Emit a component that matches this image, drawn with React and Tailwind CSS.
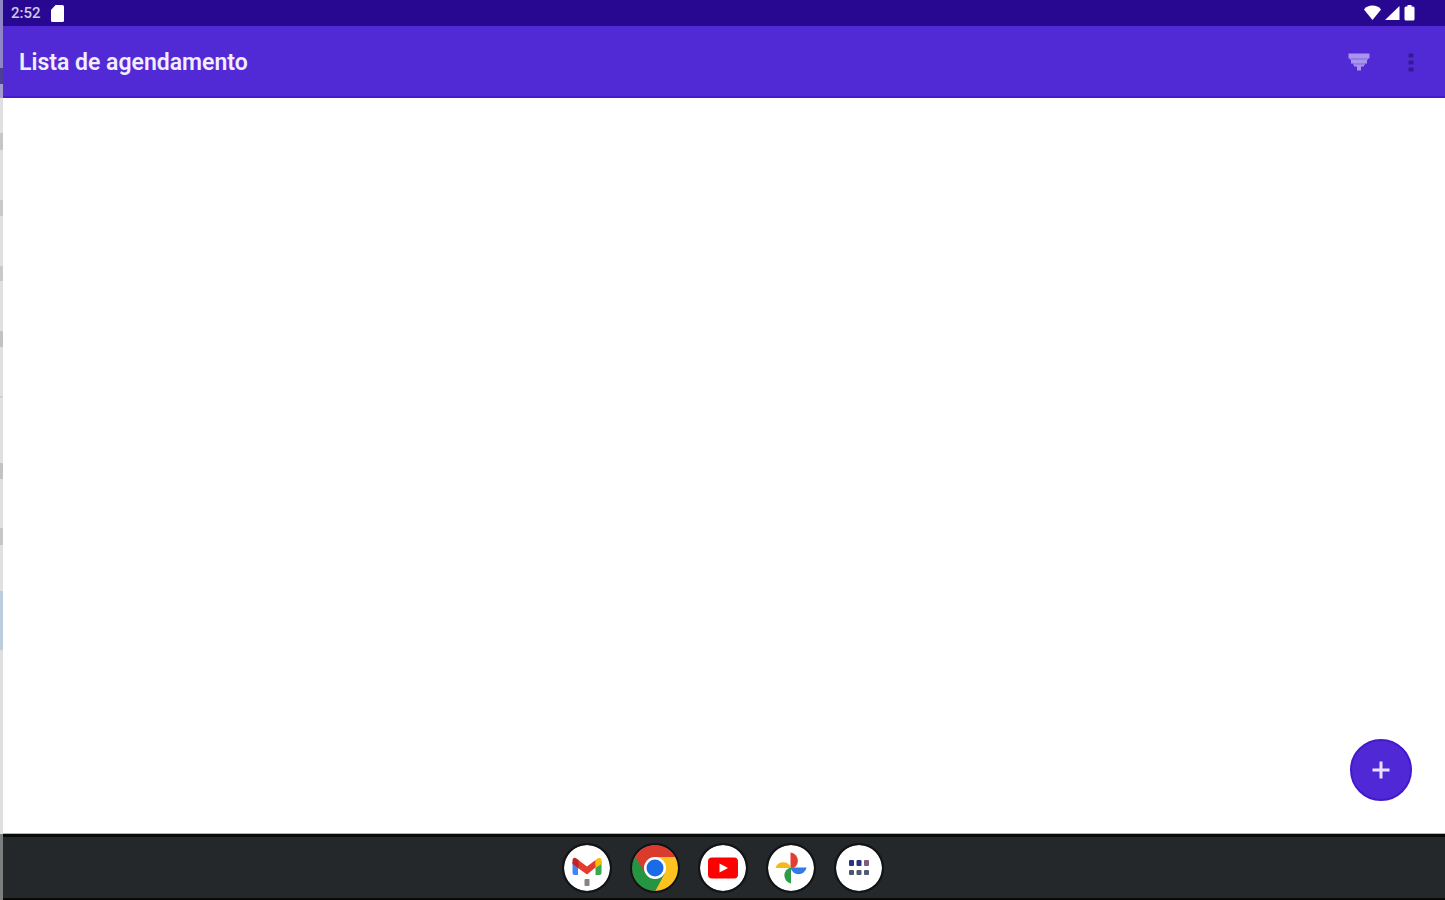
import React from "react";

// Edge of the window behind, seen along the left side
const edgeSegments = [
  { height: 68, color: "#8f84c6" },
  { height: 16, color: "#4d3f98" },
  { height: 14, color: "#a39ad0" },
  { height: 35, color: "#e0e0e0" },
  { height: 17, color: "#c6c6c6" },
  { height: 50, color: "#e0e0e0" },
  { height: 16, color: "#c9c9c9" },
  { height: 50, color: "#e0e0e0" },
  { height: 15, color: "#c9c9c9" },
  { height: 50, color: "#e0e0e0" },
  { height: 16, color: "#c2c2c2" },
  { height: 49, color: "#e0e0e0" },
  { height: 2, color: "#d0d0d0" },
  { height: 65, color: "#e0e0e0" },
  { height: 16, color: "#c2c2c2" },
  { height: 49, color: "#e0e0e0" },
  { height: 17, color: "#c6c6c6" },
  { height: 46, color: "#e0e0e0" },
  { height: 59, color: "#bccddd" },
];

const WindowEdge = () => (
  <div className="flex w-[3px] shrink-0 flex-col">
    {edgeSegments.map((segment, index) => (
      <div
        key={index}
        style={{ height: segment.height, backgroundColor: segment.color }}
      />
    ))}
    <div className="flex-1 bg-[#e0dfe0]" />
    <div className="h-[66px] bg-[#7d7f7e]" />
  </div>
);

const StatusBar = () => (
  <div className="flex h-[26px] items-center justify-between bg-[#290891] pr-[30px] pl-2 text-[#d0caea]">
    <div className="flex items-center gap-2.5">
      <span className="text-[15px] leading-6 font-medium">2:52</span>
      <svg width="13" height="17" viewBox="0 0 13 17" fill="#fff">
        <path d="M4.500 0H11.500A1.500 1.500 0 0 1 13 1.500V15.500A1.500 1.500 0 0 1 11.500 17H1.500A1.500 1.500 0 0 1 0 15.500V5Z" />
      </svg>
    </div>
    <div className="flex items-center gap-1">
      <svg width="17" height="16" viewBox="0 0 17 16" fill="#fff">
        <path d="M0 4.400C2.200 1.600 5 .5 8.500 .5s6.300 1.100 8.500 3.900L8.500 15Z" />
      </svg>
      <svg width="15" height="16" viewBox="0 0 15 16" fill="#fff">
        <path d="M14.500 1V15H0Z" />
      </svg>
      <svg width="11" height="16" viewBox="0 0 11 16" fill="#fff">
        <path d="M3.500 0H7.500V1.500H9A1.500 1.500 0 0 1 10.500 3V14A1.500 1.500 0 0 1 9 15.500H2A1.500 1.500 0 0 1 .5 14V3A1.500 1.500 0 0 1 2 1.500H3.500Z" />
      </svg>
    </div>
  </div>
);

const AppBar = () => (
  <header className="flex h-[72px] items-center justify-between border-b-2 border-[#451ccb] bg-[#512ad5] pt-1 pr-[18px] pl-4">
    <h1 className="text-[23px] leading-8 font-semibold text-[#f1edfd]">
      Lista de agendamento
    </h1>
    <div className="flex items-center gap-5">
      <button aria-label="Filtrar" className="flex size-8 items-center justify-center">
        <svg width="22" height="20" viewBox="0 0 22 20" fill="#a994ee">
          <path d="M0.500 0.500H21.500V5.500H0.500ZM3 6.500H19V10.500H3ZM6 11.500H16V13.500H6ZM9 13.500H13V17.500H9Z" />
          <path d="M2 5H20V7H2ZM5 10H17V12H5Z" fill="#937ce5" />
        </svg>
      </button>
      <button aria-label="Mais opções" className="flex size-8 items-center justify-center">
        <svg width="6" height="20" viewBox="0 0 6 20" fill="#341a91">
          <rect x="0.500" y="0.500" width="5" height="4" rx="1" />
          <rect x="0.500" y="7.500" width="5" height="4" rx="1" />
          <rect x="0.500" y="14.500" width="5" height="4" rx="1" />
        </svg>
      </button>
    </div>
  </header>
);

const GmailIcon = () => (
  <svg viewBox="0 0 46 46" className="size-full">
    <path d="M8.500 17L14 21V30H10.500A2 2 0 0 1 8.500 28Z" fill="#4285f4" />
    <path d="M31.500 20L37.500 16V28A2 2 0 0 1 35.500 30H31.500Z" fill="#34a853" />
    <path d="M31.500 15L33.500 13.500C35.500 12 37.500 13 37.500 15.500V19L31.500 23Z" fill="#fbbc04" />
    <path d="M14 14.800L23 21.500 31.500 15V22.500L23 29.500 14 23Z" fill="#e33b2e" />
    <path d="M8.500 19V15.500C8.500 13 10.500 12 12.500 13.500L14.500 15V23.300Z" fill="#c5221f" />
    <rect x="20.500" y="34" width="5" height="7" rx="1" fill="#858585" />
  </svg>
);

const ChromeIcon = () => (
  <svg viewBox="0 0 46 46" className="size-full">
    <circle cx="23" cy="23" r="23" fill="#db3a2c" />
    <path d="M23 12H43.200A23 23 0 0 1 23 46L32.500 28.500Z" fill="#fcc31e" />
    <path d="M3.080 11.500L13.500 28.500 23 34H29.500L23 46A23 23 0 0 1 3.080 11.500Z" fill="#259541" />
    <path d="M23 34L32.500 28.500 23 46Z" fill="#259541" />
    <circle cx="23" cy="23" r="11" fill="#fff" />
    <circle cx="23" cy="23" r="8.500" fill="#1a6be8" />
  </svg>
);

const YoutubeIcon = () => (
  <svg viewBox="0 0 46 46" className="size-full">
    <rect x="8" y="12.500" width="30" height="21" rx="4" fill="#ff0000" />
    <path d="M19.500 18.500L28 23 19.500 27.500Z" fill="#fff" />
  </svg>
);

const PhotosIcon = () => (
  <svg viewBox="0 0 46 46" className="size-full">
    <path d="M22.500 7.500A8.300 8.300 0 0 1 22.500 24Z" fill="#e0402f" />
    <path d="M38.600 22.500A8.200 8.200 0 0 1 22.500 22.500Z" fill="#3578ea" />
    <path d="M23 38.600A8.200 8.200 0 0 1 23 22.500Z" fill="#2a9d46" />
    <path d="M7.400 23A8.200 8.200 0 0 1 23 23Z" fill="#f5b91c" />
  </svg>
);

const AppsIcon = () => (
  <svg viewBox="0 0 46 46" className="size-full">
    <rect x="13" y="15" width="5" height="6" rx="1" fill="#2b3182" />
    <rect x="20.500" y="15" width="5" height="6" rx="1" fill="#263585" />
    <rect x="28" y="15" width="5" height="6" rx="1" fill="#85597c" />
    <rect x="13" y="25" width="5" height="5" rx="1" fill="#505466" />
    <rect x="20.500" y="25" width="5" height="5" rx="1" fill="#54586d" />
    <rect x="28" y="25" width="5" height="5" rx="1" fill="#525878" />
  </svg>
);

const dockApps = [
  { name: "Gmail", Icon: GmailIcon },
  { name: "Chrome", Icon: ChromeIcon },
  { name: "YouTube", Icon: YoutubeIcon },
  { name: "Fotos", Icon: PhotosIcon },
  { name: "Todos os apps", Icon: AppsIcon },
];

const Dock = () => (
  <nav className="flex h-[66px] items-center justify-center gap-[22px] border-t-3 border-b-2 border-[#080909] bg-[#25282a] pr-0.5">
    {dockApps.map(({ name, Icon }) => (
      <button
        key={name}
        aria-label={name}
        className="size-[46px] rounded-full bg-white outline-2 outline-[#111314]"
      >
        <Icon />
      </button>
    ))}
  </nav>
);

const App = () => {
  return (
    <div className="flex min-h-screen bg-white font-[Roboto,sans-serif]">
      <WindowEdge />
      <div className="flex min-w-0 flex-1 flex-col">
        <StatusBar />
        <AppBar />
        <main className="flex flex-1 items-end justify-end border-b border-[#b5b5b5] px-[33px] py-8">
          {/* New appointment */}
          <button
            aria-label="Adicionar agendamento"
            className="flex size-[62px] items-center justify-center rounded-full border-2 border-[#431acb] bg-[#5028d5]"
          >
            <svg width="18" height="18" viewBox="0 0 18 18" fill="none" stroke="#e9e2ff" strokeWidth="3">
              <path d="M9 0.500V17.500M0.500 9H17.500" />
            </svg>
          </button>
        </main>
        <Dock />
      </div>
    </div>
  );
};

export default App;
